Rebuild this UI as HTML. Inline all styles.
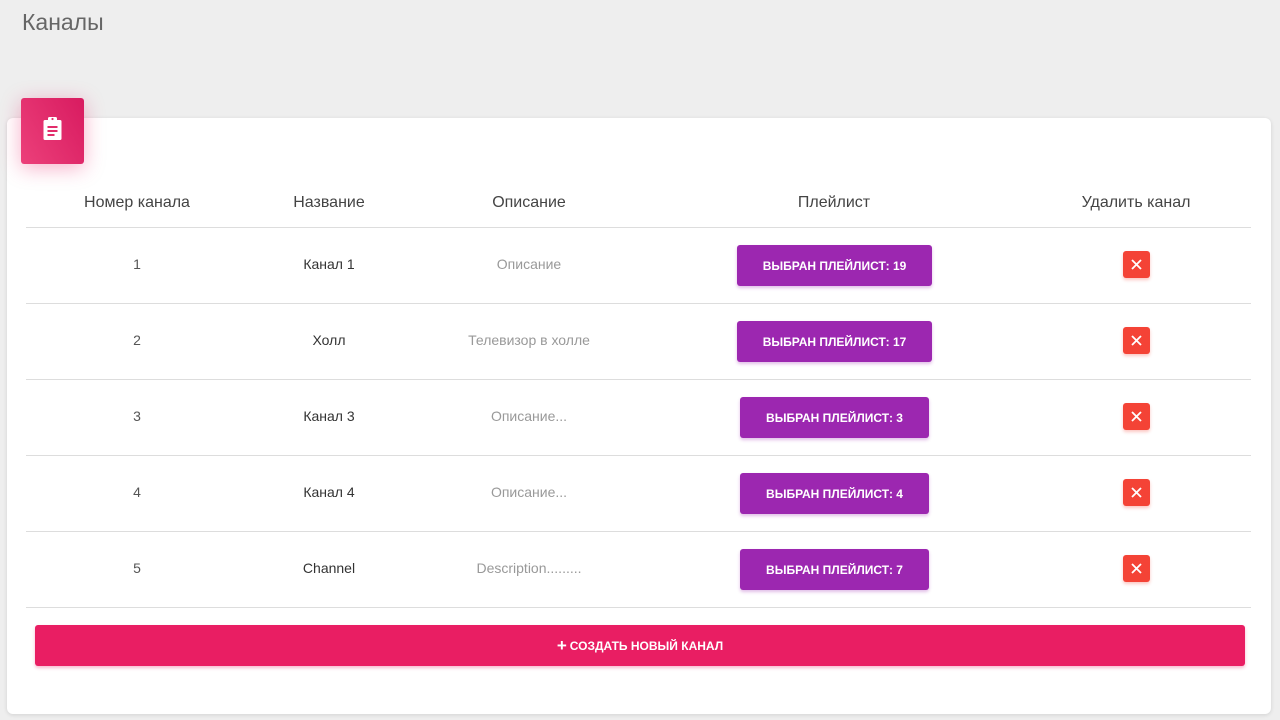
<!DOCTYPE html>
<html><head><meta charset="utf-8"><style>
body{margin:0;width:1280px;height:720px;background:#eeeeee;font-family:"Liberation Sans",sans-serif;position:relative;overflow:hidden}
.t{position:absolute;left:22px;top:9px;font-size:23px;color:#666;font-weight:300}
.card{position:absolute;left:7px;top:118px;width:1264px;height:596px;background:#fff;border-radius:6px;box-shadow:0 1px 4px rgba(0,0,0,.12)}
.ic{position:absolute;left:21px;top:98px;width:63px;height:66px;border-radius:3px;background:linear-gradient(60deg,#ec407a,#d81b60);box-shadow:0 4px 20px rgba(233,30,99,.35)}
.hl{position:absolute;left:26px;width:1225px;height:1px;background:#ddd}
.c{position:absolute;transform:translate(-50%,-50%);white-space:nowrap;font-size:14px}
.h{font-size:16px;color:#444}
.d{color:#333}.g{color:#999}
.pb{position:absolute;height:41px;background:#9c27b0;border-radius:3px;color:#fff;font-size:12px;font-weight:bold;display:flex;align-items:center;justify-content:center;box-shadow:0 2px 3px rgba(156,39,176,.3)}
.x{position:absolute;left:1123px;width:27px;height:27px;background:#f44336;border-radius:3px;box-shadow:0 2px 3px rgba(244,67,54,.3)}
.new{position:absolute;left:35px;top:625px;width:1210px;height:41px;background:#e91e63;border-radius:3px;color:#fff;font-size:12px;font-weight:bold;display:flex;align-items:center;justify-content:center;box-shadow:0 2px 3px rgba(233,30,99,.3)}
</style></head><body>
<div class="t">Каналы</div>
<div class="card"></div>
<div class="ic"><svg width="63" height="66" viewBox="0 0 63 66"><rect x="22.5" y="22" width="18" height="20" rx="1.5" fill="#fff"/><rect x="27" y="19" width="9" height="5" rx="1.5" fill="#fff"/><circle cx="31.5" cy="21" r="1.1" fill="#e22d6b"/><rect x="26.5" y="28" width="10" height="2" fill="#e22d6b"/><rect x="26.5" y="32" width="10" height="2" fill="#e22d6b"/><rect x="26.5" y="36" width="7" height="2" fill="#e22d6b"/></svg></div>
<div class="c h" style="left:137px;top:203px">Номер канала</div>
<div class="c h" style="left:329px;top:203px">Название</div>
<div class="c h" style="left:529px;top:203px">Описание</div>
<div class="c h" style="left:834px;top:203px">Плейлист</div>
<div class="c h" style="left:1136px;top:203px">Удалить канал</div>
<div class="hl" style="top:227px"></div>
<div class="hl" style="top:303px"></div><div class="hl" style="top:379px"></div><div class="hl" style="top:455px"></div><div class="hl" style="top:531px"></div><div class="hl" style="top:607px"></div>

<div class="c g" style="left:137px;top:264px;color:#555">1</div><div class="c d" style="left:329px;top:264px">Канал 1</div><div class="c g" style="left:529px;top:264px">Описание</div>
<div class="pb" style="left:737px;width:195px;top:245px">ВЫБРАН ПЛЕЙЛИСТ: 19</div>
<div class="c g" style="left:137px;top:340px;color:#555">2</div><div class="c d" style="left:329px;top:340px">Холл</div><div class="c g" style="left:529px;top:340px">Телевизор в холле</div>
<div class="pb" style="left:737px;width:195px;top:321px">ВЫБРАН ПЛЕЙЛИСТ: 17</div>
<div class="c g" style="left:137px;top:416px;color:#555">3</div><div class="c d" style="left:329px;top:416px">Канал 3</div><div class="c g" style="left:529px;top:416px">Описание...</div>
<div class="pb" style="left:740px;width:189px;top:397px">ВЫБРАН ПЛЕЙЛИСТ: 3</div>
<div class="c g" style="left:137px;top:492px;color:#555">4</div><div class="c d" style="left:329px;top:492px">Канал 4</div><div class="c g" style="left:529px;top:492px">Описание...</div>
<div class="pb" style="left:740px;width:189px;top:473px">ВЫБРАН ПЛЕЙЛИСТ: 4</div>
<div class="c g" style="left:137px;top:568px;color:#555">5</div><div class="c d" style="left:329px;top:568px">Channel</div><div class="c g" style="left:529px;top:568px">Description.........</div>
<div class="pb" style="left:740px;width:189px;top:549px">ВЫБРАН ПЛЕЙЛИСТ: 7</div>

<svg style="display:none"><defs><g id="xx"><path d="M9 9L18 18M18 9L9 18" stroke="#fff" stroke-width="1.8"/></g></defs></svg>
<div class="x" style="top:251px"><svg width="27" height="27"><use href="#xx"/></svg></div>
<div class="x" style="top:327px"><svg width="27" height="27"><use href="#xx"/></svg></div>
<div class="x" style="top:403px"><svg width="27" height="27"><use href="#xx"/></svg></div>
<div class="x" style="top:479px"><svg width="27" height="27"><use href="#xx"/></svg></div>
<div class="x" style="top:555px"><svg width="27" height="27"><use href="#xx"/></svg></div>
<div class="new"><span style="font-size:17px;margin-right:3px">+</span>СОЗДАТЬ НОВЫЙ КАНАЛ</div>
</body></html>
